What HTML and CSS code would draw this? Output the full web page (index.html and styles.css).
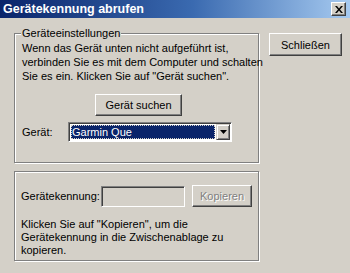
FILE: index.html
```html
<!DOCTYPE html>
<html lang="de">
<head>
<meta charset="utf-8">
<title>Gerätekennung abrufen</title>
<link rel="stylesheet" href="styles.css">
</head>
<body>
<div class="window">
  <div class="titlebar">
    <span class="title">Gerätekennung abrufen</span>
    <span class="close-btn"><svg width="8" height="7" viewBox="0 0 8 7"><path d="M0 0h2l2 2.5 2-2.5h2L5 3.5 8 7H6L4 4.5 2 7H0l3-3.5z" fill="#000"/></svg></span>
  </div>
  <div class="content">
    <div class="left">
      <fieldset class="group group-settings">
        <legend>Geräteeinstellungen</legend>
        <p class="info">Wenn das Gerät unten nicht aufgeführt ist,<br>verbinden Sie es mit dem Computer und schalten<br>Sie es ein. Klicken Sie auf "Gerät suchen".</p>
        <div class="search-row"><button class="btn btn-search">Gerät suchen</button></div>
        <div class="device-row">
          <span class="label">Gerät:</span>
          <div class="combo">
            <div class="combo-value"><span class="focus">Garmin Que</span></div>
            <div class="combo-arrow"><svg width="7" height="4" viewBox="0 0 7 4"><path d="M0 0h7L3.5 4z" fill="#000"/></svg></div>
          </div>
        </div>
      </fieldset>
      <fieldset class="group group-id">
        <div class="id-row">
          <span class="label">Gerätekennung:</span>
          <div class="field"></div>
          <button class="btn btn-copy" disabled>Kopieren</button>
        </div>
        <p class="info info-id">Klicken Sie auf "Kopieren", um die<br>Gerätekennung in die Zwischenablage zu<br>kopieren.</p>
      </fieldset>
    </div>
    <div class="right">
      <button class="btn btn-close">Schließen</button>
    </div>
  </div>
</div>
</body>
</html>
```
FILE: styles.css
```css
html, body {
  margin: 0;
  padding: 0;
  background: #d4d0c8;
  overflow: hidden;
}
.window {
  width: 350px;
  height: 273px;
  background: #d4d0c8;
  font-family: "Liberation Sans", Arial, sans-serif;
  font-size: 11px;
  color: #000;
}
.titlebar {
  height: 18px;
  background: linear-gradient(to right, #0a246a, #3a6ab0 55%, #a6caf0);
  display: flex;
  align-items: center;
  justify-content: space-between;
  padding: 0 4px 0 3px;
}
.title {
  color: #fff;
  font-weight: bold;
  font-size: 12.5px;
}
.close-btn {
  width: 15px;
  height: 14px;
  box-sizing: border-box;
  background: #d4d0c8;
  border: 1px solid;
  border-color: #fff #404040 #404040 #fff;
  box-shadow: inset -1px -1px 0 #808080;
  display: flex;
  align-items: center;
  justify-content: center;
}
.content {
  display: flex;
  padding: 9px 0 0 14px;
}
.left {
  width: 245px;
  display: flex;
  flex-direction: column;
  gap: 8px;
}
.right {
  margin-left: 10px;
  padding-top: 6px;
}
.group {
  margin: 0;
  min-width: 0;
  border: 1px solid #808080;
  box-shadow: 1px 1px 0 #fff, inset 1px 1px 0 #fff;
}
.group legend {
  padding: 0 1px;
  margin-left: -1px;
  background: #d4d0c8;
  line-height: 13px;
}
.group-settings {
  padding: 1px 6px 20px 7px;
}
.group-id {
  padding: 13px 6px 3px 6px;
}
.info {
  margin: 0;
  line-height: 14px;
  white-space: nowrap;
}
.info-id {
  line-height: 13px;
}
.btn {
  font-family: inherit;
  font-size: 11px;
  color: #000;
  background: #d4d0c8;
  border: 1px solid;
  border-color: #fff #404040 #404040 #fff;
  box-shadow: inset -1px -1px 0 #808080;
  padding: 0;
  margin: 0;
}
.search-row {
  display: flex;
  justify-content: center;
  margin-top: 11px;
  padding-left: 3px;
}
.btn-search {
  width: 87px;
  height: 22px;
}
.device-row {
  display: flex;
  align-items: center;
  margin-top: 6px;
}
.device-row .label {
  width: 46px;
}
.combo {
  width: 164px;
  height: 20px;
  box-sizing: border-box;
  border: 1px solid;
  border-color: #808080 #fff #fff #808080;
  box-shadow: inset 1px 1px 0 #404040;
  background: #fff;
  display: flex;
  padding: 2px 2px 2px 2px;
}
.combo-value {
  flex: 1;
  background: #0a246a;
  color: #fff;
  display: flex;
  align-items: center;
  margin-right: 1px;
}
.combo-value .focus {
  flex: 1;
  align-self: stretch;
  display: flex;
  align-items: center;
  outline: 1px dotted #d4d0c8;
  outline-offset: -1px;
  padding-left: 1px;
}
.combo-arrow {
  width: 14px;
  margin: -1px -1px -1px 0;
  box-sizing: border-box;
  background: #d4d0c8;
  border: 1px solid;
  border-color: #d4d0c8 #404040 #404040 #d4d0c8;
  box-shadow: inset 1px 1px 0 #fff, inset -1px -1px 0 #808080;
  display: flex;
  align-items: center;
  justify-content: center;
}
.id-row {
  display: flex;
  align-items: center;
  margin-bottom: 11px;
}
.id-row .label {
  width: 81px;
}
.field {
  width: 86px;
  height: 21px;
  box-sizing: border-box;
  border: 1px solid;
  border-color: #808080 #fff #fff #808080;
  box-shadow: inset 1px 1px 0 #404040, inset -1px -1px 0 #d4d0c8;
  background: #d4d0c8;
}
.btn-copy {
  width: 61px;
  height: 22px;
  margin-left: 7px;
  color: #808080;
  text-shadow: 1px 1px 0 #fff;
}
.btn-close {
  width: 73px;
  height: 23px;
}
```
